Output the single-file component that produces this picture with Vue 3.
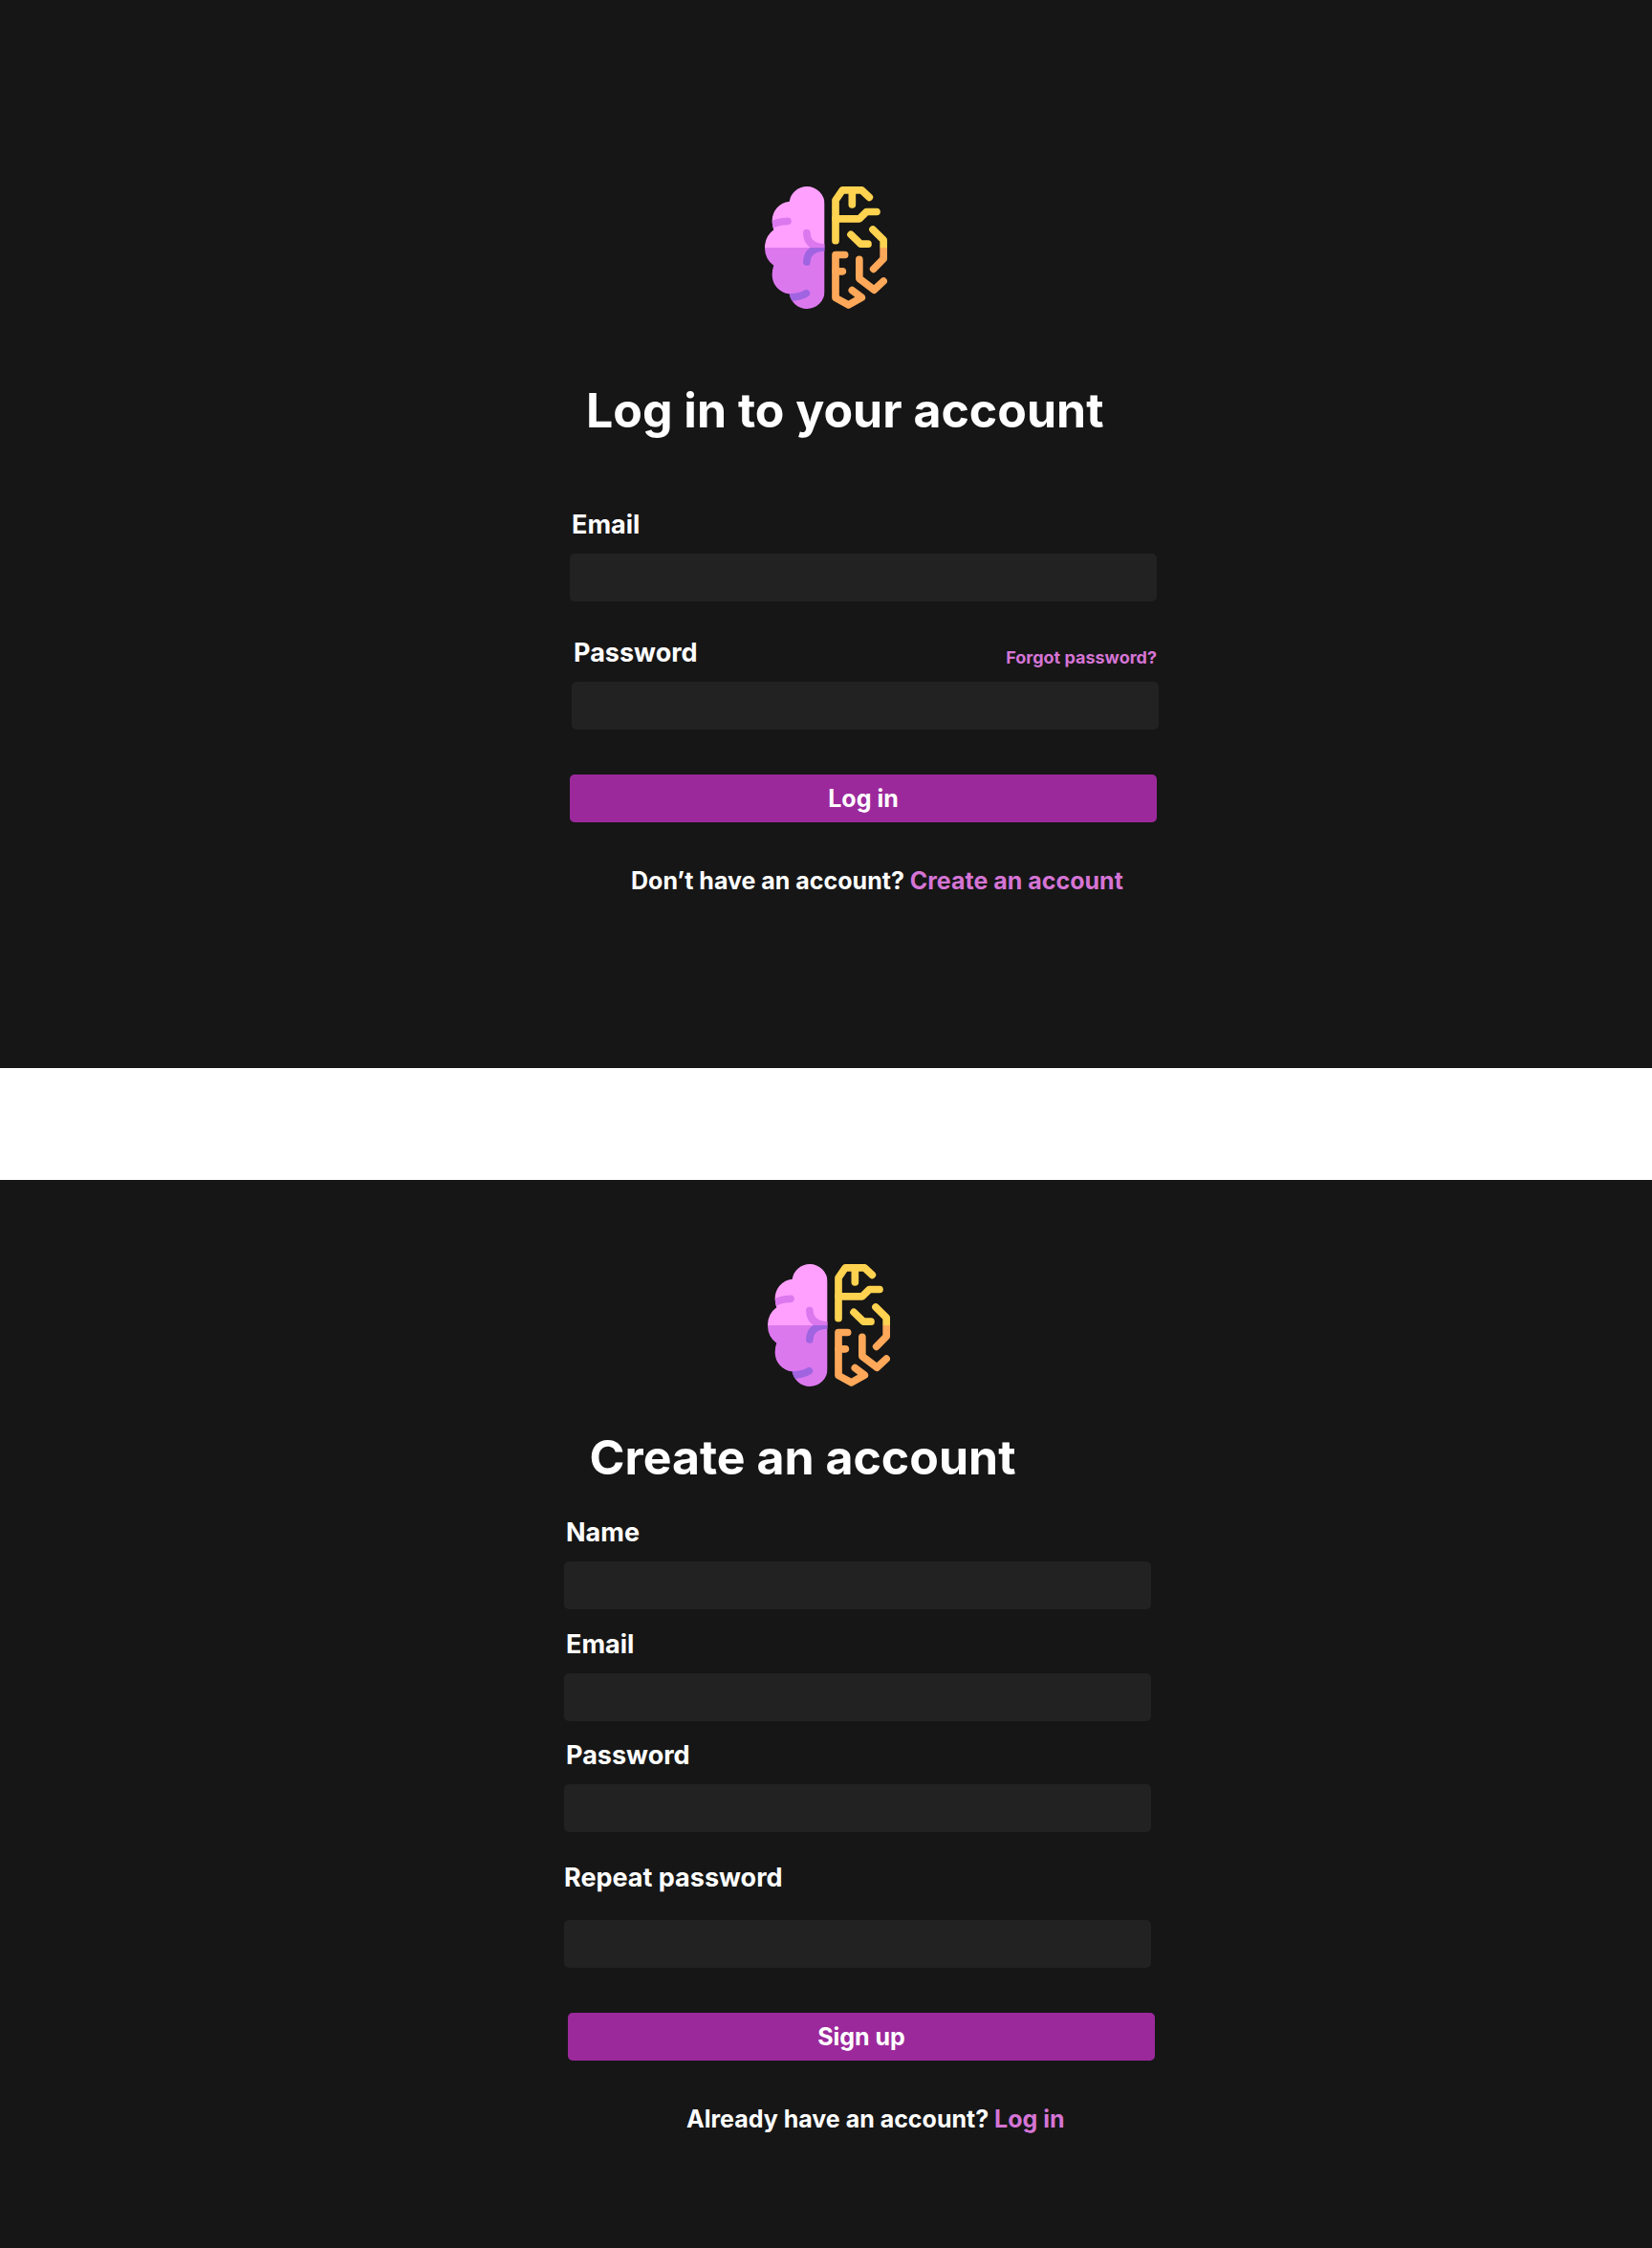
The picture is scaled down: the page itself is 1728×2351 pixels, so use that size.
<script setup>
import { h } from 'vue'

const signUpFields = [
  { label: 'Name', cls: 'name', type: 'text' },
  { label: 'Email', cls: 'mail', type: 'email' },
  { label: 'Password', cls: 'pass', type: 'password' },
  { label: 'Repeat password', cls: 'repeat', type: 'password' },
]

const stroke = (color, d) =>
  h('path', {
    d,
    fill: 'none',
    stroke: color,
    'stroke-width': 23,
    'stroke-linecap': 'round',
    'stroke-linejoin': 'round',
  })

// Half organic, half circuit brain; `id` keeps the clip paths unique per instance
const BrainLogo = ({ id }) => {
  const outline =
    'M218 86A56 56 0 0 0 162 30A56 56 0 0 0 107 77A60 60 0 0 0 53 137Q53 152 58 166A69 69 0 0 0 30 222A69 69 0 0 0 58 278Q53 290 53 306A60 60 0 0 0 107 367A56 56 0 0 0 162 414A56 56 0 0 0 218 358Z'
  return h('svg', { width: 128, height: 128, viewBox: '30 30 384 384' }, [
    h('defs', [
      h('clipPath', { id: id + '-brain' }, [h('path', { d: outline })]),
      h('clipPath', { id: id + '-top' }, [h('rect', { x: 0, y: 0, width: 450, height: 222 })]),
      h('clipPath', { id: id + '-bottom' }, [h('rect', { x: 0, y: 222, width: 450, height: 228 })]),
    ]),
    h('g', { 'clip-path': `url(#${id}-brain)` }, [
      h('rect', { x: 30, y: 30, width: 188, height: 192, fill: '#ffa0ff' }),
      h('rect', { x: 30, y: 222, width: 188, height: 192, fill: '#dc78ee' }),
      h('g', { 'clip-path': `url(#${id}-top)` }, [
        stroke('#dc78ee', 'M40 157Q68 139 102 139'),
        stroke('#dc78ee', 'M161.500 176Q163 222 222 222'),
      ]),
      h('g', { 'clip-path': `url(#${id}-bottom)` }, [
        stroke('#a064e1', 'M161.500 267Q163 222 222 222'),
        stroke('#a064e1', 'M160 365Q140 378 100 378'),
      ]),
    ]),
    stroke('#ffd250', 'M252 200V73L273.500 41.500H334L358 64'),
    stroke('#ffd250', 'M304 41.500V87'),
    stroke('#ffd250', 'M252 131.500H327L349 109.500H381'),
    stroke('#ffd250', 'M300 181L331 210.500H354'),
    h('g', { 'clip-path': `url(#${id}-top)` }, [stroke('#ffd250', 'M369 165L402.500 198V256')]),
    h('g', { 'clip-path': `url(#${id}-bottom)` }, [
      stroke('#ffa859', 'M402.500 190V257L371 289'),
    ]),
    stroke('#ffa859', 'M281 244.500H252V379.500L292.500 401.500L334 378.500L304 356'),
    stroke('#ffa859', 'M252 296.500H274'),
    stroke('#ffa859', 'M326.500 259V319L373 354.500L402.500 327'),
  ])
}
</script>

<template>
  <div class="page">
    <section class="panel login">
      <BrainLogo id="login" class="logo" />
      <h1>Log in to your account</h1>
      <label class="mail-label" for="login-mail">Email</label>
      <input id="login-mail" type="email" />
      <div class="pass-row">
        <label for="login-pass">Password</label>
        <a class="forgot">Forgot password?</a>
      </div>
      <input id="login-pass" class="pass-input" type="password" />
      <button type="button">Log in</button>
      <p>Don’t have an account? <a>Create an account</a></p>
    </section>

    <section class="panel signup">
      <BrainLogo id="signup" class="logo" />
      <h1>Create an account</h1>
      <div v-for="f in signUpFields" :key="f.cls" class="field" :class="f.cls">
        <label :for="'signup-' + f.cls">{{ f.label }}</label>
        <input :id="'signup-' + f.cls" :type="f.type" />
      </div>
      <button type="button">Sign up</button>
      <p>Already have an account? <a>Log in</a></p>
    </section>
  </div>
</template>

<style>
body {
  margin: 0;
  background: #fff;
}
</style>

<style scoped>
.page {
  display: flex;
  flex-direction: column;
  gap: 117px;
  width: 1728px;
  font-family: Inter, sans-serif;
  font-weight: 700;
  color: #fff;
}
.panel {
  box-sizing: border-box;
  display: flex;
  flex-direction: column;
  align-items: flex-start;
  height: 1117px;
  background: #161616;
}
.logo {
  display: block;
  flex: none;
}
h1 {
  margin: 0;
  font-size: 50px;
  line-height: 60px;
  font-weight: 700;
  white-space: nowrap;
}
label {
  display: block;
  font-size: 27px;
  line-height: 32px;
  white-space: nowrap;
}
input,
button {
  display: block;
  flex: none;
  box-sizing: border-box;
  width: 614px;
  height: 50px;
  margin: 0;
  padding: 0;
  border: 0;
  border-radius: 5px;
  background: #222;
  color: #fff;
}
button {
  background: #9c299c;
  font: 700 25px/50px Inter, sans-serif;
  text-align: center;
}
p {
  margin: 0;
  font-size: 25px;
  line-height: 30px;
  white-space: nowrap;
}
a {
  color: #d574d5;
}

.login {
  padding: 195px 0 0 596px;
}
.login .logo {
  margin-left: 204px;
}
.login h1 {
  margin: 76px 0 0 17px;
}
.login .mail-label {
  margin: 74px 0 14px 2px;
}
.pass-row {
  display: flex;
  justify-content: space-between;
  width: 614px;
  margin: 38px 0 14px;
}
.pass-row label {
  margin-left: 4px;
}
.forgot {
  font-size: 18px;
  line-height: 22px;
  margin-top: 10px;
}
.pass-input {
  margin-left: 2px;
}
.login button {
  margin-top: 47px;
}
.login p {
  margin: 46px 0 0 64px;
}

.signup {
  padding: 88px 0 0 590px;
}
.signup .logo {
  margin-left: 213px;
}
.signup h1 {
  margin: 44px 0 0 26.5px;
}
.field label {
  margin: 0 0 14px 2px;
}
.name {
  margin-top: 33px;
}
.mail {
  margin-top: 21px;
}
.pass {
  margin-top: 20px;
}
.repeat {
  margin-top: 32px;
}
.repeat label {
  margin: 0 0 28px;
}
.signup button {
  margin: 47px 0 0 4px;
}
.signup p {
  margin: 46px 0 0 128px;
}
</style>
